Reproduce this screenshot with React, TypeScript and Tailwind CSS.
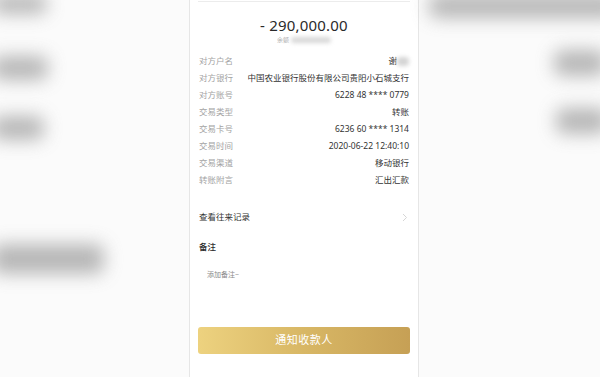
import React from "react";

const rows: [string, string][] = [
  ["对方户名", "谢"],
  ["对方银行", "中国农业银行股份有限公司贵阳小石城支行"],
  ["对方账号", "6228 48 **** 0779"],
  ["交易类型", "转账"],
  ["交易卡号", "6236 60 **** 1314"],
  ["交易时间", "2020-06-22 12:40:10"],
  ["交易渠道", "移动银行"],
  ["转账附言", "汇出汇款"],
];

function Blob({ w, h, className = "" }: { w: string; h: string; className?: string }) {
  return <div className={`${w} ${h} rounded-lg bg-[#a0a0a0] blur-[9px] opacity-75 ${className}`} />;
}

export default function App() {
  return (
    <div
      className="w-[600px] h-[377px] overflow-hidden bg-[#fbfbfb] flex"
      style={{ fontFamily: '"Noto Sans", "Noto Sans CJK SC", sans-serif' }}
    >
      {/* left blurred side */}
      <div className="w-[189px] shrink-0 flex flex-col">
        <Blob w="w-[55px]" h="h-[20px]" className="-mt-[6px] -ml-[8px]" />
        <Blob w="w-[56px]" h="h-[24px]" className="mt-[42px] -ml-[8px]" />
        <Blob w="w-[52px]" h="h-[24px]" className="mt-[36px] -ml-[8px]" />
        <Blob w="w-[112px]" h="h-[30px]" className="mt-[104px] -ml-[8px]" />
      </div>

      {/* phone */}
      <div className="w-[230px] shrink-0 bg-white border-x border-[#e6e6e6] flex flex-col">
        <div className="mx-[8px] mt-[1px] border-t border-[#ececec]" />
        <div className="flex flex-col items-center mt-[14px]">
          <div className="text-[15px] leading-[18px] text-[#2a2a2a] tracking-[0.2px]">- 290,000.00</div>
          <div className="flex items-center mt-[1px] h-[10px]">
            <span className="text-[6px] text-[#b0b0b0]">余额</span>
            <div className="w-[40px] h-[6px] ml-[2px] bg-[#d8d8d8] blur-[2px] rounded" />
          </div>
        </div>
        <div className="mt-[8px] px-[9px] flex flex-col">
          {rows.map(([k, v], i) => (
            <div key={k} className="h-[17px] flex items-center justify-between">
              <span className="text-[8.5px] text-[#a3a3a3]">{k}</span>
              {i === 0 ? (
                <span className="flex items-center">
                  <span className="text-[8.5px] text-[#333]">{v}</span>
                  <span className="w-[12px] h-[9px] bg-[#d4d4d4] blur-[2px] rounded" />
                </span>
              ) : (
                <span className="text-[8.5px] text-[#333]">{v}</span>
              )}
            </div>
          ))}
        </div>
        <div className="mt-[20px] px-[9px] h-[17px] flex items-center justify-between">
          <span className="text-[8.5px] text-[#333]">查看往来记录</span>
          <svg width="6" height="9" viewBox="0 0 6 9" className="mr-[1px]">
            <path d="M1 1l3.5 3.5L1 8" fill="none" stroke="#d6d6d6" strokeWidth="1" />
          </svg>
        </div>
        <div className="mt-[13px] px-[9px] h-[17px] flex items-center">
          <span className="text-[8.5px] font-medium text-[#2a2a2a]">备注</span>
        </div>
        <div className="mt-[13px] pl-[17px] h-[12px] flex items-center">
          <span className="text-[7px] text-[#8a8a8a]">添加备注~</span>
        </div>
        <div className="mt-[46px] mx-[8px] h-[27px] rounded-[3px] bg-gradient-to-r from-[#edd27f] via-[#d8b765] to-[#c6a055] flex items-center justify-center">
          <span className="text-[11px] text-white tracking-[0.5px]">通知收款人</span>
        </div>
      </div>

      {/* right blurred side */}
      <div className="flex-1 flex flex-col">
        <Blob w="w-[190px]" h="h-[24px]" className="-mt-[6px] ml-[10px]" />
        <Blob w="w-[52px]" h="h-[26px]" className="mt-[32px] ml-[135px]" />
        <Blob w="w-[52px]" h="h-[26px]" className="mt-[32px] ml-[137px]" />
      </div>
    </div>
  );
}
